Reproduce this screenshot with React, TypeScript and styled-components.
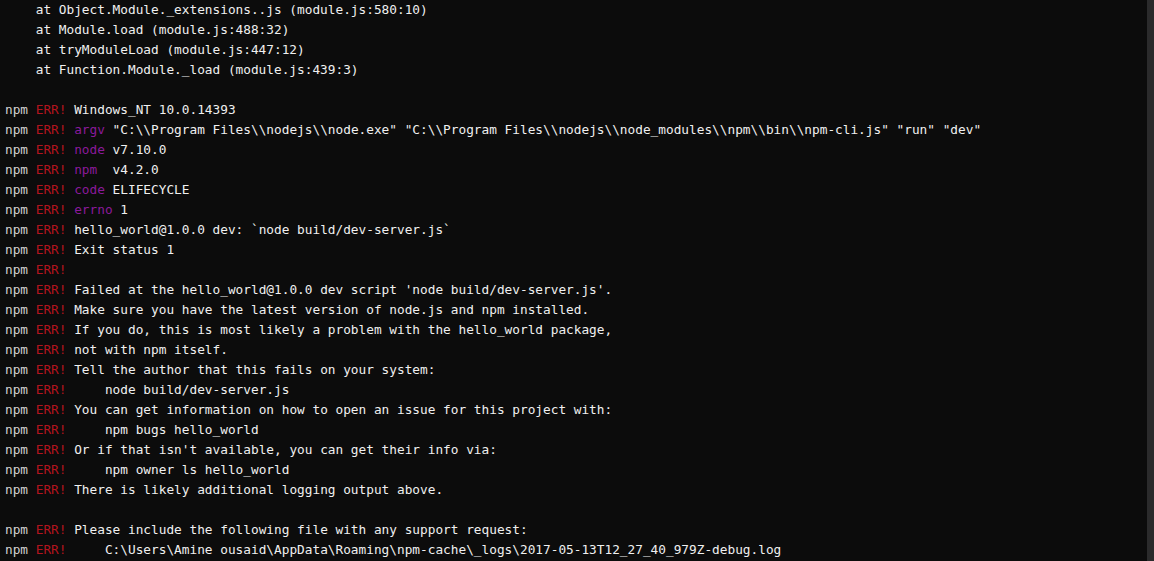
import React from "react";
import styled, { createGlobalStyle } from "styled-components";

const GlobalStyle = createGlobalStyle`
  html, body {
    margin: 0;
    padding: 0;
    background: #0c0c0c;
  }
  #root {
    height: 561px;
  }
`;

const Screen = styled.div`
  display: flex;
  flex-direction: row;
  width: 1154px;
  height: 561px;
  background: #0c0c0c;
  overflow: hidden;
`;

const Output = styled.div`
  flex: 1;
  display: flex;
  flex-direction: column;
  padding-left: 5px;
  font-family: "DejaVu Sans Mono", "Liberation Mono", monospace;
  font-size: 12.77px;
  color: #f0f0f0;
`;

const Line = styled.div`
  height: 20px;
  line-height: 20px;
  white-space: pre;
`;

const Prefix = styled.span`
  color: #d2d2d2;
`;

const Err = styled.span`
  color: #b3141e;
`;

const Key = styled.span`
  color: #8b1a9b;
`;

const Scrollbar = styled.div`
  width: 7px;
  height: 100%;
  background: #2b2b2c;
`;

type Row =
  | { kind: "plain"; text: string }
  | { kind: "blank" }
  | { kind: "npm"; key?: string; text: string };

const rows: Row[] = [
  { kind: "plain", text: "    at Object.Module._extensions..js (module.js:580:10)" },
  { kind: "plain", text: "    at Module.load (module.js:488:32)" },
  { kind: "plain", text: "    at tryModuleLoad (module.js:447:12)" },
  { kind: "plain", text: "    at Function.Module._load (module.js:439:3)" },
  { kind: "blank" },
  { kind: "npm", text: "Windows_NT 10.0.14393" },
  {
    kind: "npm",
    key: "argv",
    text: ' "C:\\\\Program Files\\\\nodejs\\\\node.exe" "C:\\\\Program Files\\\\nodejs\\\\node_modules\\\\npm\\\\bin\\\\npm-cli.js" "run" "dev"',
  },
  { kind: "npm", key: "node", text: " v7.10.0" },
  { kind: "npm", key: "npm", text: "  v4.2.0" },
  { kind: "npm", key: "code", text: " ELIFECYCLE" },
  { kind: "npm", key: "errno", text: " 1" },
  { kind: "npm", text: "hello_world@1.0.0 dev: `node build/dev-server.js`" },
  { kind: "npm", text: "Exit status 1" },
  { kind: "npm", text: "" },
  { kind: "npm", text: "Failed at the hello_world@1.0.0 dev script 'node build/dev-server.js'." },
  { kind: "npm", text: "Make sure you have the latest version of node.js and npm installed." },
  { kind: "npm", text: "If you do, this is most likely a problem with the hello_world package," },
  { kind: "npm", text: "not with npm itself." },
  { kind: "npm", text: "Tell the author that this fails on your system:" },
  { kind: "npm", text: "    node build/dev-server.js" },
  { kind: "npm", text: "You can get information on how to open an issue for this project with:" },
  { kind: "npm", text: "    npm bugs hello_world" },
  { kind: "npm", text: "Or if that isn't available, you can get their info via:" },
  { kind: "npm", text: "    npm owner ls hello_world" },
  { kind: "npm", text: "There is likely additional logging output above." },
  { kind: "blank" },
  { kind: "npm", text: "Please include the following file with any support request:" },
  {
    kind: "npm",
    text: "    C:\\Users\\Amine ousaid\\AppData\\Roaming\\npm-cache\\_logs\\2017-05-13T12_27_40_979Z-debug.log",
  },
];

export default function App() {
  return (
    <>
      <GlobalStyle />
      <Screen>
        <Output>
          {rows.map((r, i) => {
            if (r.kind === "blank") return <Line key={i}> </Line>;
            if (r.kind === "plain") return <Line key={i}>{r.text}</Line>;
            return (
              <Line key={i}>
                <Prefix>npm </Prefix>
                <Err>ERR!</Err>
                {" "}
                {r.key ? <Key>{r.key}</Key> : null}
                {r.text}
              </Line>
            );
          })}
        </Output>
        <Scrollbar />
      </Screen>
    </>
  );
}
